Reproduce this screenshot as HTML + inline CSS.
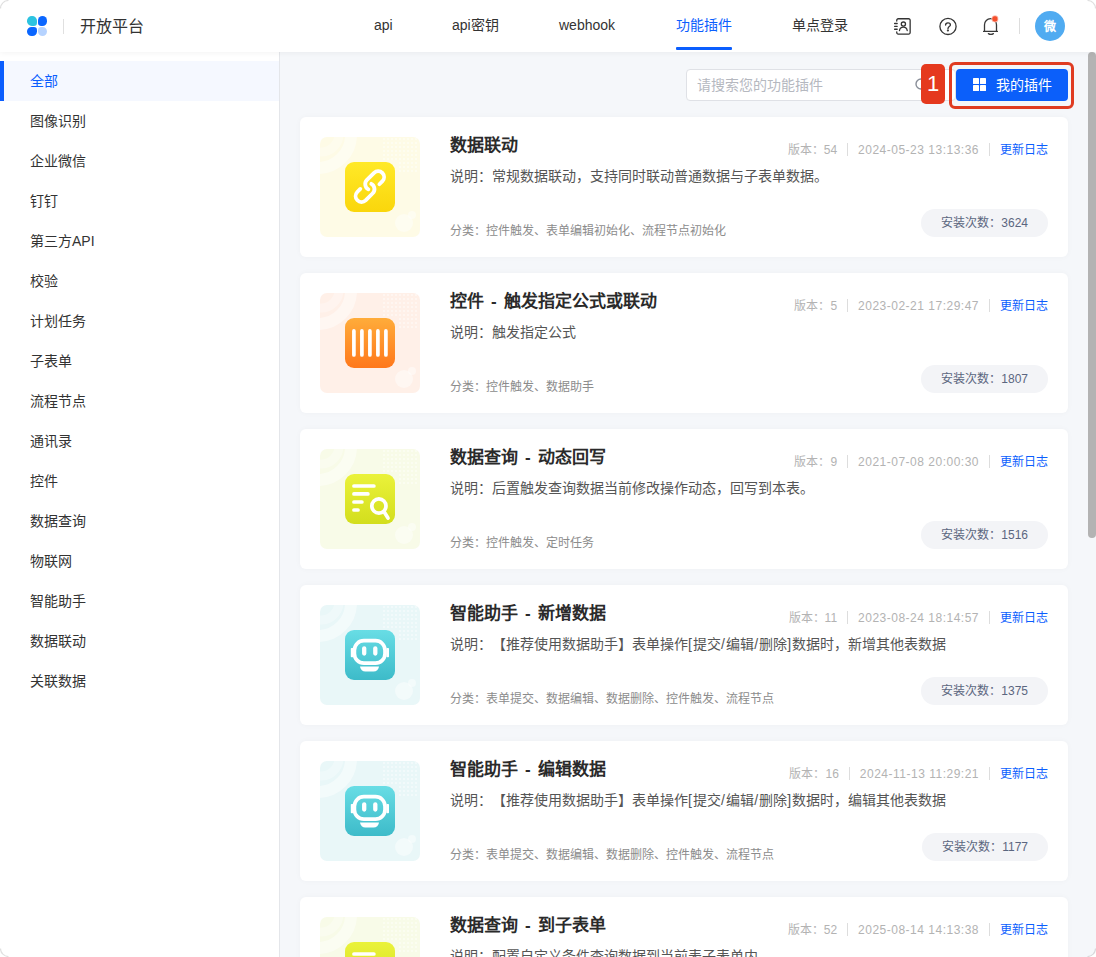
<!DOCTYPE html>
<html lang="zh-CN"><head><meta charset="utf-8">
<style>
*{box-sizing:border-box;margin:0;padding:0}
html,body{width:1096px;height:957px;overflow:hidden;background:#fff;font-family:"Liberation Sans",sans-serif;color:#333;text-spacing-trim:space-all}
.hdr{position:absolute;left:0;top:0;width:1096px;height:52px;background:#fff;box-shadow:0 1px 6px rgba(0,0,0,0.05);z-index:5}
.logo{position:absolute;left:27px;top:16px;width:20px;height:20px}
.logo i{position:absolute;width:9.5px;height:9.5px}
.hdiv{position:absolute;left:63px;top:19px;width:1px;height:15px;background:#e0e0e0}
.brand{position:absolute;left:80px;top:16px;font-size:16px;line-height:22px;color:#333}
.nav{position:absolute;top:15px;font-size:14px;line-height:20px;color:#333}
.nav.act{color:#0b5efe}
.uline{position:absolute;left:676px;top:47.4px;width:56px;height:2.5px;background:#0b5efe;border-radius:1px}
.side{position:absolute;left:0;top:52px;width:280px;height:905px;background:#fff;border-right:1px solid #e4e6ea}
.side div{position:absolute;left:0;width:279px;height:40px;padding-left:30px;font-size:14px;line-height:40px;color:#333}
.side .act{background:#f5f8ff;color:#0b5efe}
.side .act:before{content:"";position:absolute;left:0;top:0;width:4px;height:40px;background:#0b5efe}
.main{position:absolute;left:280px;top:52px;width:816px;height:905px;background:#f5f7fa}
.search{position:absolute;left:686px;top:69px;width:270px;height:32px;border:1px solid #dfe1e6;border-radius:4px;background:#fff;font-size:14px;line-height:30px;padding-left:10px;color:#b5b8bf}
.btn{position:absolute;left:956px;top:69px;width:112px;height:32px;background:#0b5ffa;border-radius:4px;color:#fff;font-size:14px;line-height:32px}
.annot{position:absolute;left:949px;top:62px;width:125px;height:47px;border:3px solid #e03c22;border-radius:6px}
.badge{position:absolute;left:921px;top:64px;width:24px;height:40px;background:#e5391e;border-radius:5px;color:#fff;font-size:22px;line-height:40px;text-align:center}
.card{position:absolute;left:300px;width:768px;height:140px;background:#fff;border-radius:6px;box-shadow:0 0 6px rgba(0,0,0,0.03)}
.ibox{position:absolute;left:20px;top:20px;width:100px;height:100px;border-radius:7px;overflow:hidden}
.ico{position:absolute;left:25px;top:25px;width:50px;height:50px;border-radius:9px}
.ttl{position:absolute;left:150px;top:17px;font-size:17px;line-height:24px;font-weight:bold;color:#2a2a2a;word-spacing:2.4px;white-space:nowrap}
.desc{position:absolute;left:150px;top:49px;font-size:14px;line-height:20px;color:#555;white-space:nowrap}
.cat{position:absolute;left:150px;top:106px;font-size:12px;line-height:17px;color:#8c8c8c}
.ver{position:absolute;right:20px;top:25px;font-size:12px;line-height:17px;color:#b3b3b3;white-space:nowrap}
.ver .dt{letter-spacing:0.5px}
.lp{font-style:normal;letter-spacing:1.2px}
.ver .sep{display:inline-block;width:1px;height:13px;background:#ddd;vertical-align:-2px;margin:0 10px}
.ver a{color:#0b5efe;text-decoration:none}
.cnt{position:absolute;right:20px;top:92px;height:28px;padding:1px 20px 0;border-radius:14px;background:#f3f4f7;font-size:12px;line-height:27px;color:#5b6680;white-space:nowrap}
.sb{position:absolute;left:1088px;top:52px;width:8px;height:486px;background:#b3b3b3;border-radius:4px}
</style></head><body>
<div class="hdr">
  <div class="logo"><i style="left:0;top:0;background:#2cc3e0;border-radius:50% 50% 35% 50%"></i><i style="left:10.5px;top:0;background:#0a66ff;border-radius:50% 50% 50% 35%"></i><i style="left:0;top:10.5px;background:#0a66ff;border-radius:50% 35% 50% 50%"></i><i style="left:10.5px;top:10.5px;background:#b6d3ff;border-radius:35% 50% 50% 50%"></i></div>
  <div class="hdiv"></div>
  <div class="brand">开放平台</div>
  <div class="nav" style="left:374px">api</div>
  <div class="nav" style="left:452px">api密钥</div>
  <div class="nav" style="left:559px">webhook</div>
  <div class="nav act" style="left:676px">功能插件</div>
  <div class="nav" style="left:792px">单点登录</div>
  <div class="uline"></div>
  <svg style="position:absolute;left:890px;top:14px" width="24" height="24" viewBox="0 0 24 24" fill="none" stroke="#333" stroke-width="1.3" stroke-linecap="round">
    <path d="M6.75 7V6.3A1.5 1.5 0 0 1 8.25 4.75H18.65A1.5 1.5 0 0 1 20.15 6.3V18.5A1.5 1.5 0 0 1 18.65 20.05H8.25A1.5 1.5 0 0 1 6.75 18.5V17.8"/>
    <path d="M4.6 9.5H7.2M4.6 12.37H7.2M4.6 15.24H7.2"/>
    <circle cx="13.4" cy="10.1" r="2.1"/>
    <path d="M9.5 16.5C9.8 14.4 11.4 13.1 13.35 13.1S16.9 14.4 17.2 16.5"/>
  </svg>
  <svg style="position:absolute;left:936px;top:14px" width="24" height="24" viewBox="0 0 24 24" fill="none" stroke="#333" stroke-width="1.3" stroke-linecap="round">
    <circle cx="12" cy="12.4" r="8.1"/>
    <path d="M9.6 11c0-1.3 1.1-2.2 2.4-2.2s2.4 0.9 2.4 2.1c0 1.6-2.4 1.8-2.4 3.5v0.4"/>
    <circle cx="11.9" cy="16.5" r="0.45" fill="#333"/>
  </svg>
  <svg style="position:absolute;left:979px;top:14px" width="24" height="24" viewBox="0 0 24 24" fill="none" stroke="#383838" stroke-width="1.3" stroke-linecap="round" stroke-linejoin="round">
    <path d="M4.6 17.4H18.4M5.5 17.4V10.7A6 6 0 0 1 17.5 10.7V17.4"/>
    <path d="M9.4 19.6Q11.9 21.2 14.4 19.6"/>
    <circle cx="16" cy="4.9" r="3.3" fill="#f5502d" stroke="#fff" stroke-width="0.6"/>
  </svg>
  <div style="position:absolute;left:1019px;top:18px;width:1px;height:16px;background:#ddd"></div>
  <div style="position:absolute;left:1035px;top:11px;width:30px;height:30px;border-radius:50%;background:#50abf1;color:#fff;font-size:12px;font-weight:bold;line-height:32px;text-align:center">微</div>
</div>
<div class="side">
  <div class="act" style="top:9px">全部</div>
  <div style="top:49px">图像识别</div>
  <div style="top:89px">企业微信</div>
  <div style="top:129px">钉钉</div>
  <div style="top:169px">第三方API</div>
  <div style="top:209px">校验</div>
  <div style="top:249px">计划任务</div>
  <div style="top:289px">子表单</div>
  <div style="top:329px">流程节点</div>
  <div style="top:369px">通讯录</div>
  <div style="top:409px">控件</div>
  <div style="top:449px">数据查询</div>
  <div style="top:489px">物联网</div>
  <div style="top:529px">智能助手</div>
  <div style="top:569px">数据联动</div>
  <div style="top:609px">关联数据</div>
</div>
<div class="main"></div>
<div class="search">请搜索您的功能插件<svg style="position:absolute;left:226px;top:6px" width="16" height="16" viewBox="0 0 16 16" fill="none" stroke="#8a8f99" stroke-width="1.4"><circle cx="8" cy="8" r="5"/><path d="M11.6 11.6l2.6 2.6"/></svg></div>
<div class="btn"><svg style="position:absolute;left:17px;top:9px" width="13" height="13" viewBox="0 0 13 13" fill="#fff"><rect x="0" y="0" width="6" height="6" rx="0.6"/><rect x="7" y="0" width="6" height="6" rx="0.6"/><rect x="0" y="7" width="6" height="6" rx="0.6"/><rect x="7" y="7" width="6" height="6" rx="0.6"/></svg><span style="position:absolute;left:40px;top:0">我的插件</span></div>
<div class="annot"></div>
<div class="badge">1</div>
<div id="cards">
<div class="card" style="top:117px">
 <div class="ibox" style="background:#fefbe6"><svg width="100" height="100" viewBox="0 0 100 100" style="position:absolute;left:0;top:0"><circle cx="-2" cy="-2" r="33" fill="none" stroke="rgba(255,255,255,0.45)" stroke-width="12"/><circle cx="1" cy="-3" r="18" fill="none" stroke="rgba(255,255,255,0.3)" stroke-width="9"/><g fill="rgba(255,255,255,0.55)"><circle cx="64" cy="2" r="1"/><circle cx="64" cy="6" r="1"/><circle cx="64" cy="10" r="1"/><circle cx="64" cy="14" r="1"/><circle cx="64" cy="18" r="1"/><circle cx="64" cy="22" r="1"/><circle cx="68" cy="2" r="1"/><circle cx="68" cy="6" r="1"/><circle cx="68" cy="10" r="1"/><circle cx="68" cy="14" r="1"/><circle cx="68" cy="18" r="1"/><circle cx="68" cy="22" r="1"/><circle cx="72" cy="2" r="1"/><circle cx="72" cy="6" r="1"/><circle cx="72" cy="10" r="1"/><circle cx="72" cy="14" r="1"/><circle cx="72" cy="18" r="1"/><circle cx="72" cy="22" r="1"/><circle cx="76" cy="2" r="1"/><circle cx="76" cy="6" r="1"/><circle cx="76" cy="10" r="1"/><circle cx="76" cy="14" r="1"/><circle cx="76" cy="18" r="1"/><circle cx="76" cy="22" r="1"/><circle cx="80" cy="2" r="1"/><circle cx="80" cy="6" r="1"/><circle cx="80" cy="10" r="1"/><circle cx="80" cy="14" r="1"/><circle cx="80" cy="18" r="1"/><circle cx="80" cy="22" r="1"/><circle cx="80" cy="26" r="1"/><circle cx="80" cy="30" r="1"/><circle cx="80" cy="34" r="1"/><circle cx="84" cy="2" r="1"/><circle cx="84" cy="6" r="1"/><circle cx="84" cy="10" r="1"/><circle cx="84" cy="14" r="1"/><circle cx="84" cy="18" r="1"/><circle cx="84" cy="22" r="1"/><circle cx="84" cy="26" r="1"/><circle cx="84" cy="30" r="1"/><circle cx="84" cy="34" r="1"/><circle cx="88" cy="2" r="1"/><circle cx="88" cy="6" r="1"/><circle cx="88" cy="10" r="1"/><circle cx="88" cy="14" r="1"/><circle cx="88" cy="18" r="1"/><circle cx="88" cy="22" r="1"/><circle cx="88" cy="26" r="1"/><circle cx="88" cy="30" r="1"/><circle cx="88" cy="34" r="1"/><circle cx="92" cy="2" r="1"/><circle cx="92" cy="6" r="1"/><circle cx="92" cy="10" r="1"/><circle cx="92" cy="14" r="1"/><circle cx="92" cy="18" r="1"/><circle cx="92" cy="22" r="1"/><circle cx="92" cy="26" r="1"/><circle cx="92" cy="30" r="1"/><circle cx="92" cy="34" r="1"/><circle cx="96" cy="2" r="1"/><circle cx="96" cy="6" r="1"/><circle cx="96" cy="10" r="1"/><circle cx="96" cy="14" r="1"/><circle cx="96" cy="18" r="1"/><circle cx="96" cy="22" r="1"/><circle cx="96" cy="26" r="1"/><circle cx="96" cy="30" r="1"/><circle cx="96" cy="34" r="1"/></g><circle cx="84" cy="86" r="9" fill="rgba(255,255,255,0.45)"/><circle cx="92" cy="78" r="4" fill="rgba(255,255,255,0.45)"/></svg>
  <div class="ico" style="background:linear-gradient(180deg,#ffe928,#fad60c)"><svg width="50" height="50" viewBox="0 0 50 50" fill="none" stroke="#fff" stroke-width="3.7" stroke-linecap="round" stroke-linejoin="round"><g transform="translate(24.85 24.6) scale(1.02) translate(-24.75 -24.4)" stroke-width="3.75"><path d="M34.1 22.1L37.1 19.1A5.8 5.8 0 0 0 28.9 10.9L21.9 17.9A5.8 5.8 0 0 0 23.3 27.1"/><path d="M15.4 26.7L12.4 29.7A5.8 5.8 0 0 0 20.6 37.9L27.6 30.9A5.8 5.8 0 0 0 26.2 21.7"/></g></svg></div></div>
 <div class="ttl">数据联动</div>
 <div class="desc">说明：常规数据联动，支持同时联动普通数据与子表单数据。</div>
 <div class="cat">分类：控件触发、表单编辑初始化、流程节点初始化</div>
 <div class="ver">版本：54<span class="sep"></span><span class="dt">2024-05-23 13:13:36</span><span class="sep"></span><a>更新日志</a></div>
 <div class="cnt">安装次数：3624</div>
</div>
<div class="card" style="top:273px">
 <div class="ibox" style="background:#fff0e8"><svg width="100" height="100" viewBox="0 0 100 100" style="position:absolute;left:0;top:0"><circle cx="-2" cy="-2" r="33" fill="none" stroke="rgba(255,255,255,0.45)" stroke-width="12"/><circle cx="1" cy="-3" r="18" fill="none" stroke="rgba(255,255,255,0.3)" stroke-width="9"/><g fill="rgba(255,255,255,0.55)"><circle cx="64" cy="2" r="1"/><circle cx="64" cy="6" r="1"/><circle cx="64" cy="10" r="1"/><circle cx="64" cy="14" r="1"/><circle cx="64" cy="18" r="1"/><circle cx="64" cy="22" r="1"/><circle cx="68" cy="2" r="1"/><circle cx="68" cy="6" r="1"/><circle cx="68" cy="10" r="1"/><circle cx="68" cy="14" r="1"/><circle cx="68" cy="18" r="1"/><circle cx="68" cy="22" r="1"/><circle cx="72" cy="2" r="1"/><circle cx="72" cy="6" r="1"/><circle cx="72" cy="10" r="1"/><circle cx="72" cy="14" r="1"/><circle cx="72" cy="18" r="1"/><circle cx="72" cy="22" r="1"/><circle cx="76" cy="2" r="1"/><circle cx="76" cy="6" r="1"/><circle cx="76" cy="10" r="1"/><circle cx="76" cy="14" r="1"/><circle cx="76" cy="18" r="1"/><circle cx="76" cy="22" r="1"/><circle cx="80" cy="2" r="1"/><circle cx="80" cy="6" r="1"/><circle cx="80" cy="10" r="1"/><circle cx="80" cy="14" r="1"/><circle cx="80" cy="18" r="1"/><circle cx="80" cy="22" r="1"/><circle cx="80" cy="26" r="1"/><circle cx="80" cy="30" r="1"/><circle cx="80" cy="34" r="1"/><circle cx="84" cy="2" r="1"/><circle cx="84" cy="6" r="1"/><circle cx="84" cy="10" r="1"/><circle cx="84" cy="14" r="1"/><circle cx="84" cy="18" r="1"/><circle cx="84" cy="22" r="1"/><circle cx="84" cy="26" r="1"/><circle cx="84" cy="30" r="1"/><circle cx="84" cy="34" r="1"/><circle cx="88" cy="2" r="1"/><circle cx="88" cy="6" r="1"/><circle cx="88" cy="10" r="1"/><circle cx="88" cy="14" r="1"/><circle cx="88" cy="18" r="1"/><circle cx="88" cy="22" r="1"/><circle cx="88" cy="26" r="1"/><circle cx="88" cy="30" r="1"/><circle cx="88" cy="34" r="1"/><circle cx="92" cy="2" r="1"/><circle cx="92" cy="6" r="1"/><circle cx="92" cy="10" r="1"/><circle cx="92" cy="14" r="1"/><circle cx="92" cy="18" r="1"/><circle cx="92" cy="22" r="1"/><circle cx="92" cy="26" r="1"/><circle cx="92" cy="30" r="1"/><circle cx="92" cy="34" r="1"/><circle cx="96" cy="2" r="1"/><circle cx="96" cy="6" r="1"/><circle cx="96" cy="10" r="1"/><circle cx="96" cy="14" r="1"/><circle cx="96" cy="18" r="1"/><circle cx="96" cy="22" r="1"/><circle cx="96" cy="26" r="1"/><circle cx="96" cy="30" r="1"/><circle cx="96" cy="34" r="1"/></g><circle cx="84" cy="86" r="9" fill="rgba(255,255,255,0.45)"/><circle cx="92" cy="78" r="4" fill="rgba(255,255,255,0.45)"/></svg>
  <div class="ico" style="background:linear-gradient(180deg,#ffac3a,#ff781b)"><svg width="50" height="50" viewBox="0 0 50 50" fill="none" stroke="#fff" stroke-width="3.7" stroke-linecap="round" stroke-linejoin="round"><path d="M8.9 12.9V37M16.9 12.9V37M24.9 12.9V37M32.9 12.9V37M40.9 12.9V37"/></svg></div></div>
 <div class="ttl">控件 - 触发指定公式或联动</div>
 <div class="desc">说明：触发指定公式</div>
 <div class="cat">分类：控件触发、数据助手</div>
 <div class="ver">版本：5<span class="sep"></span><span class="dt">2023-02-21 17:29:47</span><span class="sep"></span><a>更新日志</a></div>
 <div class="cnt">安装次数：1807</div>
</div>
<div class="card" style="top:429px">
 <div class="ibox" style="background:#f8fbe8"><svg width="100" height="100" viewBox="0 0 100 100" style="position:absolute;left:0;top:0"><circle cx="-2" cy="-2" r="33" fill="none" stroke="rgba(255,255,255,0.45)" stroke-width="12"/><circle cx="1" cy="-3" r="18" fill="none" stroke="rgba(255,255,255,0.3)" stroke-width="9"/><g fill="rgba(255,255,255,0.55)"><circle cx="64" cy="2" r="1"/><circle cx="64" cy="6" r="1"/><circle cx="64" cy="10" r="1"/><circle cx="64" cy="14" r="1"/><circle cx="64" cy="18" r="1"/><circle cx="64" cy="22" r="1"/><circle cx="68" cy="2" r="1"/><circle cx="68" cy="6" r="1"/><circle cx="68" cy="10" r="1"/><circle cx="68" cy="14" r="1"/><circle cx="68" cy="18" r="1"/><circle cx="68" cy="22" r="1"/><circle cx="72" cy="2" r="1"/><circle cx="72" cy="6" r="1"/><circle cx="72" cy="10" r="1"/><circle cx="72" cy="14" r="1"/><circle cx="72" cy="18" r="1"/><circle cx="72" cy="22" r="1"/><circle cx="76" cy="2" r="1"/><circle cx="76" cy="6" r="1"/><circle cx="76" cy="10" r="1"/><circle cx="76" cy="14" r="1"/><circle cx="76" cy="18" r="1"/><circle cx="76" cy="22" r="1"/><circle cx="80" cy="2" r="1"/><circle cx="80" cy="6" r="1"/><circle cx="80" cy="10" r="1"/><circle cx="80" cy="14" r="1"/><circle cx="80" cy="18" r="1"/><circle cx="80" cy="22" r="1"/><circle cx="80" cy="26" r="1"/><circle cx="80" cy="30" r="1"/><circle cx="80" cy="34" r="1"/><circle cx="84" cy="2" r="1"/><circle cx="84" cy="6" r="1"/><circle cx="84" cy="10" r="1"/><circle cx="84" cy="14" r="1"/><circle cx="84" cy="18" r="1"/><circle cx="84" cy="22" r="1"/><circle cx="84" cy="26" r="1"/><circle cx="84" cy="30" r="1"/><circle cx="84" cy="34" r="1"/><circle cx="88" cy="2" r="1"/><circle cx="88" cy="6" r="1"/><circle cx="88" cy="10" r="1"/><circle cx="88" cy="14" r="1"/><circle cx="88" cy="18" r="1"/><circle cx="88" cy="22" r="1"/><circle cx="88" cy="26" r="1"/><circle cx="88" cy="30" r="1"/><circle cx="88" cy="34" r="1"/><circle cx="92" cy="2" r="1"/><circle cx="92" cy="6" r="1"/><circle cx="92" cy="10" r="1"/><circle cx="92" cy="14" r="1"/><circle cx="92" cy="18" r="1"/><circle cx="92" cy="22" r="1"/><circle cx="92" cy="26" r="1"/><circle cx="92" cy="30" r="1"/><circle cx="92" cy="34" r="1"/><circle cx="96" cy="2" r="1"/><circle cx="96" cy="6" r="1"/><circle cx="96" cy="10" r="1"/><circle cx="96" cy="14" r="1"/><circle cx="96" cy="18" r="1"/><circle cx="96" cy="22" r="1"/><circle cx="96" cy="26" r="1"/><circle cx="96" cy="30" r="1"/><circle cx="96" cy="34" r="1"/></g><circle cx="84" cy="86" r="9" fill="rgba(255,255,255,0.45)"/><circle cx="92" cy="78" r="4" fill="rgba(255,255,255,0.45)"/></svg>
  <div class="ico" style="background:linear-gradient(180deg,#eaf23a,#d3de1d)"><svg width="50" height="50" viewBox="0 0 50 50" fill="none" stroke="#fff" stroke-width="3.7" stroke-linecap="round" stroke-linejoin="round"><path d="M8.95 12H28.9M8.95 19.9H22.9M8.95 28H16.9M8.95 36H13"/><circle cx="33.9" cy="32" r="7.1"/><path d="M38.9 37.6L43 44.1"/></svg></div></div>
 <div class="ttl">数据查询 - 动态回写</div>
 <div class="desc">说明：后置触发查询数据当前修改操作动态，回写到本表。</div>
 <div class="cat">分类：控件触发、定时任务</div>
 <div class="ver">版本：9<span class="sep"></span><span class="dt">2021-07-08 20:00:30</span><span class="sep"></span><a>更新日志</a></div>
 <div class="cnt">安装次数：1516</div>
</div>
<div class="card" style="top:585px">
 <div class="ibox" style="background:#e9f7f8"><svg width="100" height="100" viewBox="0 0 100 100" style="position:absolute;left:0;top:0"><circle cx="-2" cy="-2" r="33" fill="none" stroke="rgba(255,255,255,0.45)" stroke-width="12"/><circle cx="1" cy="-3" r="18" fill="none" stroke="rgba(255,255,255,0.3)" stroke-width="9"/><g fill="rgba(255,255,255,0.55)"><circle cx="64" cy="2" r="1"/><circle cx="64" cy="6" r="1"/><circle cx="64" cy="10" r="1"/><circle cx="64" cy="14" r="1"/><circle cx="64" cy="18" r="1"/><circle cx="64" cy="22" r="1"/><circle cx="68" cy="2" r="1"/><circle cx="68" cy="6" r="1"/><circle cx="68" cy="10" r="1"/><circle cx="68" cy="14" r="1"/><circle cx="68" cy="18" r="1"/><circle cx="68" cy="22" r="1"/><circle cx="72" cy="2" r="1"/><circle cx="72" cy="6" r="1"/><circle cx="72" cy="10" r="1"/><circle cx="72" cy="14" r="1"/><circle cx="72" cy="18" r="1"/><circle cx="72" cy="22" r="1"/><circle cx="76" cy="2" r="1"/><circle cx="76" cy="6" r="1"/><circle cx="76" cy="10" r="1"/><circle cx="76" cy="14" r="1"/><circle cx="76" cy="18" r="1"/><circle cx="76" cy="22" r="1"/><circle cx="80" cy="2" r="1"/><circle cx="80" cy="6" r="1"/><circle cx="80" cy="10" r="1"/><circle cx="80" cy="14" r="1"/><circle cx="80" cy="18" r="1"/><circle cx="80" cy="22" r="1"/><circle cx="80" cy="26" r="1"/><circle cx="80" cy="30" r="1"/><circle cx="80" cy="34" r="1"/><circle cx="84" cy="2" r="1"/><circle cx="84" cy="6" r="1"/><circle cx="84" cy="10" r="1"/><circle cx="84" cy="14" r="1"/><circle cx="84" cy="18" r="1"/><circle cx="84" cy="22" r="1"/><circle cx="84" cy="26" r="1"/><circle cx="84" cy="30" r="1"/><circle cx="84" cy="34" r="1"/><circle cx="88" cy="2" r="1"/><circle cx="88" cy="6" r="1"/><circle cx="88" cy="10" r="1"/><circle cx="88" cy="14" r="1"/><circle cx="88" cy="18" r="1"/><circle cx="88" cy="22" r="1"/><circle cx="88" cy="26" r="1"/><circle cx="88" cy="30" r="1"/><circle cx="88" cy="34" r="1"/><circle cx="92" cy="2" r="1"/><circle cx="92" cy="6" r="1"/><circle cx="92" cy="10" r="1"/><circle cx="92" cy="14" r="1"/><circle cx="92" cy="18" r="1"/><circle cx="92" cy="22" r="1"/><circle cx="92" cy="26" r="1"/><circle cx="92" cy="30" r="1"/><circle cx="92" cy="34" r="1"/><circle cx="96" cy="2" r="1"/><circle cx="96" cy="6" r="1"/><circle cx="96" cy="10" r="1"/><circle cx="96" cy="14" r="1"/><circle cx="96" cy="18" r="1"/><circle cx="96" cy="22" r="1"/><circle cx="96" cy="26" r="1"/><circle cx="96" cy="30" r="1"/><circle cx="96" cy="34" r="1"/></g><circle cx="84" cy="86" r="9" fill="rgba(255,255,255,0.45)"/><circle cx="92" cy="78" r="4" fill="rgba(255,255,255,0.45)"/></svg>
  <div class="ico" style="background:linear-gradient(180deg,#68dde5,#3dbbc9)"><svg width="50" height="50" viewBox="0 0 50 50" fill="none" stroke="#fff" stroke-width="3.7" stroke-linecap="round" stroke-linejoin="round"><rect x="9.4" y="10.7" width="30.6" height="22.5" rx="9.5"/><path d="M19.2 18.3V23.5M30.3 18.3V23.5" stroke-width="4.3"/><rect x="5.8" y="18" width="2.6" height="9.2" rx="0.8" fill="#fff" stroke="none"/><rect x="41.4" y="18" width="2.6" height="9.2" rx="0.8" fill="#fff" stroke="none"/><path d="M15 36.4H34C33.6 39.4 31.4 41.4 28.6 41.4H20.4C17.6 41.4 15.4 39.4 15 36.4Z" fill="#fff" stroke="none"/></svg></div></div>
 <div class="ttl">智能助手 - 新增数据</div>
 <div class="desc">说明：【推荐使用数据助手】表单操作<i class="lp">[</i>提交<i class="lp">/</i>编辑<i class="lp">/</i>删除<i class="lp">]</i>数据时，新增其他表数据</div>
 <div class="cat">分类：表单提交、数据编辑、数据删除、控件触发、流程节点</div>
 <div class="ver">版本：11<span class="sep"></span><span class="dt">2023-08-24 18:14:57</span><span class="sep"></span><a>更新日志</a></div>
 <div class="cnt">安装次数：1375</div>
</div>
<div class="card" style="top:741px">
 <div class="ibox" style="background:#e9f7f8"><svg width="100" height="100" viewBox="0 0 100 100" style="position:absolute;left:0;top:0"><circle cx="-2" cy="-2" r="33" fill="none" stroke="rgba(255,255,255,0.45)" stroke-width="12"/><circle cx="1" cy="-3" r="18" fill="none" stroke="rgba(255,255,255,0.3)" stroke-width="9"/><g fill="rgba(255,255,255,0.55)"><circle cx="64" cy="2" r="1"/><circle cx="64" cy="6" r="1"/><circle cx="64" cy="10" r="1"/><circle cx="64" cy="14" r="1"/><circle cx="64" cy="18" r="1"/><circle cx="64" cy="22" r="1"/><circle cx="68" cy="2" r="1"/><circle cx="68" cy="6" r="1"/><circle cx="68" cy="10" r="1"/><circle cx="68" cy="14" r="1"/><circle cx="68" cy="18" r="1"/><circle cx="68" cy="22" r="1"/><circle cx="72" cy="2" r="1"/><circle cx="72" cy="6" r="1"/><circle cx="72" cy="10" r="1"/><circle cx="72" cy="14" r="1"/><circle cx="72" cy="18" r="1"/><circle cx="72" cy="22" r="1"/><circle cx="76" cy="2" r="1"/><circle cx="76" cy="6" r="1"/><circle cx="76" cy="10" r="1"/><circle cx="76" cy="14" r="1"/><circle cx="76" cy="18" r="1"/><circle cx="76" cy="22" r="1"/><circle cx="80" cy="2" r="1"/><circle cx="80" cy="6" r="1"/><circle cx="80" cy="10" r="1"/><circle cx="80" cy="14" r="1"/><circle cx="80" cy="18" r="1"/><circle cx="80" cy="22" r="1"/><circle cx="80" cy="26" r="1"/><circle cx="80" cy="30" r="1"/><circle cx="80" cy="34" r="1"/><circle cx="84" cy="2" r="1"/><circle cx="84" cy="6" r="1"/><circle cx="84" cy="10" r="1"/><circle cx="84" cy="14" r="1"/><circle cx="84" cy="18" r="1"/><circle cx="84" cy="22" r="1"/><circle cx="84" cy="26" r="1"/><circle cx="84" cy="30" r="1"/><circle cx="84" cy="34" r="1"/><circle cx="88" cy="2" r="1"/><circle cx="88" cy="6" r="1"/><circle cx="88" cy="10" r="1"/><circle cx="88" cy="14" r="1"/><circle cx="88" cy="18" r="1"/><circle cx="88" cy="22" r="1"/><circle cx="88" cy="26" r="1"/><circle cx="88" cy="30" r="1"/><circle cx="88" cy="34" r="1"/><circle cx="92" cy="2" r="1"/><circle cx="92" cy="6" r="1"/><circle cx="92" cy="10" r="1"/><circle cx="92" cy="14" r="1"/><circle cx="92" cy="18" r="1"/><circle cx="92" cy="22" r="1"/><circle cx="92" cy="26" r="1"/><circle cx="92" cy="30" r="1"/><circle cx="92" cy="34" r="1"/><circle cx="96" cy="2" r="1"/><circle cx="96" cy="6" r="1"/><circle cx="96" cy="10" r="1"/><circle cx="96" cy="14" r="1"/><circle cx="96" cy="18" r="1"/><circle cx="96" cy="22" r="1"/><circle cx="96" cy="26" r="1"/><circle cx="96" cy="30" r="1"/><circle cx="96" cy="34" r="1"/></g><circle cx="84" cy="86" r="9" fill="rgba(255,255,255,0.45)"/><circle cx="92" cy="78" r="4" fill="rgba(255,255,255,0.45)"/></svg>
  <div class="ico" style="background:linear-gradient(180deg,#68dde5,#3dbbc9)"><svg width="50" height="50" viewBox="0 0 50 50" fill="none" stroke="#fff" stroke-width="3.7" stroke-linecap="round" stroke-linejoin="round"><rect x="9.4" y="10.7" width="30.6" height="22.5" rx="9.5"/><path d="M19.2 18.3V23.5M30.3 18.3V23.5" stroke-width="4.3"/><rect x="5.8" y="18" width="2.6" height="9.2" rx="0.8" fill="#fff" stroke="none"/><rect x="41.4" y="18" width="2.6" height="9.2" rx="0.8" fill="#fff" stroke="none"/><path d="M15 36.4H34C33.6 39.4 31.4 41.4 28.6 41.4H20.4C17.6 41.4 15.4 39.4 15 36.4Z" fill="#fff" stroke="none"/></svg></div></div>
 <div class="ttl">智能助手 - 编辑数据</div>
 <div class="desc">说明：【推荐使用数据助手】表单操作<i class="lp">[</i>提交<i class="lp">/</i>编辑<i class="lp">/</i>删除<i class="lp">]</i>数据时，编辑其他表数据</div>
 <div class="cat">分类：表单提交、数据编辑、数据删除、控件触发、流程节点</div>
 <div class="ver">版本：16<span class="sep"></span><span class="dt">2024-11-13 11:29:21</span><span class="sep"></span><a>更新日志</a></div>
 <div class="cnt">安装次数：1177</div>
</div>
<div class="card" style="top:897px">
 <div class="ibox" style="background:#f8fbe8"><svg width="100" height="100" viewBox="0 0 100 100" style="position:absolute;left:0;top:0"><circle cx="-2" cy="-2" r="33" fill="none" stroke="rgba(255,255,255,0.45)" stroke-width="12"/><circle cx="1" cy="-3" r="18" fill="none" stroke="rgba(255,255,255,0.3)" stroke-width="9"/><g fill="rgba(255,255,255,0.55)"><circle cx="64" cy="2" r="1"/><circle cx="64" cy="6" r="1"/><circle cx="64" cy="10" r="1"/><circle cx="64" cy="14" r="1"/><circle cx="64" cy="18" r="1"/><circle cx="64" cy="22" r="1"/><circle cx="68" cy="2" r="1"/><circle cx="68" cy="6" r="1"/><circle cx="68" cy="10" r="1"/><circle cx="68" cy="14" r="1"/><circle cx="68" cy="18" r="1"/><circle cx="68" cy="22" r="1"/><circle cx="72" cy="2" r="1"/><circle cx="72" cy="6" r="1"/><circle cx="72" cy="10" r="1"/><circle cx="72" cy="14" r="1"/><circle cx="72" cy="18" r="1"/><circle cx="72" cy="22" r="1"/><circle cx="76" cy="2" r="1"/><circle cx="76" cy="6" r="1"/><circle cx="76" cy="10" r="1"/><circle cx="76" cy="14" r="1"/><circle cx="76" cy="18" r="1"/><circle cx="76" cy="22" r="1"/><circle cx="80" cy="2" r="1"/><circle cx="80" cy="6" r="1"/><circle cx="80" cy="10" r="1"/><circle cx="80" cy="14" r="1"/><circle cx="80" cy="18" r="1"/><circle cx="80" cy="22" r="1"/><circle cx="80" cy="26" r="1"/><circle cx="80" cy="30" r="1"/><circle cx="80" cy="34" r="1"/><circle cx="84" cy="2" r="1"/><circle cx="84" cy="6" r="1"/><circle cx="84" cy="10" r="1"/><circle cx="84" cy="14" r="1"/><circle cx="84" cy="18" r="1"/><circle cx="84" cy="22" r="1"/><circle cx="84" cy="26" r="1"/><circle cx="84" cy="30" r="1"/><circle cx="84" cy="34" r="1"/><circle cx="88" cy="2" r="1"/><circle cx="88" cy="6" r="1"/><circle cx="88" cy="10" r="1"/><circle cx="88" cy="14" r="1"/><circle cx="88" cy="18" r="1"/><circle cx="88" cy="22" r="1"/><circle cx="88" cy="26" r="1"/><circle cx="88" cy="30" r="1"/><circle cx="88" cy="34" r="1"/><circle cx="92" cy="2" r="1"/><circle cx="92" cy="6" r="1"/><circle cx="92" cy="10" r="1"/><circle cx="92" cy="14" r="1"/><circle cx="92" cy="18" r="1"/><circle cx="92" cy="22" r="1"/><circle cx="92" cy="26" r="1"/><circle cx="92" cy="30" r="1"/><circle cx="92" cy="34" r="1"/><circle cx="96" cy="2" r="1"/><circle cx="96" cy="6" r="1"/><circle cx="96" cy="10" r="1"/><circle cx="96" cy="14" r="1"/><circle cx="96" cy="18" r="1"/><circle cx="96" cy="22" r="1"/><circle cx="96" cy="26" r="1"/><circle cx="96" cy="30" r="1"/><circle cx="96" cy="34" r="1"/></g><circle cx="84" cy="86" r="9" fill="rgba(255,255,255,0.45)"/><circle cx="92" cy="78" r="4" fill="rgba(255,255,255,0.45)"/></svg>
  <div class="ico" style="background:linear-gradient(180deg,#eaf23a,#d3de1d)"><svg width="50" height="50" viewBox="0 0 50 50" fill="none" stroke="#fff" stroke-width="3.7" stroke-linecap="round" stroke-linejoin="round"><path d="M8.95 12H28.9M8.95 19.9H22.9M8.95 28H16.9M8.95 36H13"/><circle cx="33.9" cy="32" r="7.1"/><path d="M38.9 37.6L43 44.1"/></svg></div></div>
 <div class="ttl">数据查询 - 到子表单</div>
 <div class="desc">说明：配置自定义条件查询数据到当前表子表单内</div>
 <div class="cat"></div>
 <div class="ver">版本：52<span class="sep"></span><span class="dt">2025-08-14 14:13:38</span><span class="sep"></span><a>更新日志</a></div>
 
</div>
</div><!--cards-end-->
<div class="sb"></div>
<svg style="position:absolute;left:0;top:0;z-index:20;pointer-events:none" width="1096" height="957" viewBox="0 0 1096 957">
<path d="M0 0H8.5A8.5 8.5 0 0 0 0 8.5Z M1096 0V8.5A8.5 8.5 0 0 0 1087.5 0Z M0 957V948.5A8.5 8.5 0 0 0 8.5 957Z M1096 957H1087.5A8.5 8.5 0 0 0 1096 948.5Z" fill="#fff"/>
<path d="M8.5 0.5A8 8 0 0 0 0.5 8.5 M1087.5 0.5A8 8 0 0 1 1095.5 8.5 M0.5 948.5A8 8 0 0 0 8.5 956.5 M1095.5 948.5A8 8 0 0 1 1087.5 956.5" fill="none" stroke="rgba(0,0,0,0.12)" stroke-width="1.2"/>
</svg>
</body></html>
